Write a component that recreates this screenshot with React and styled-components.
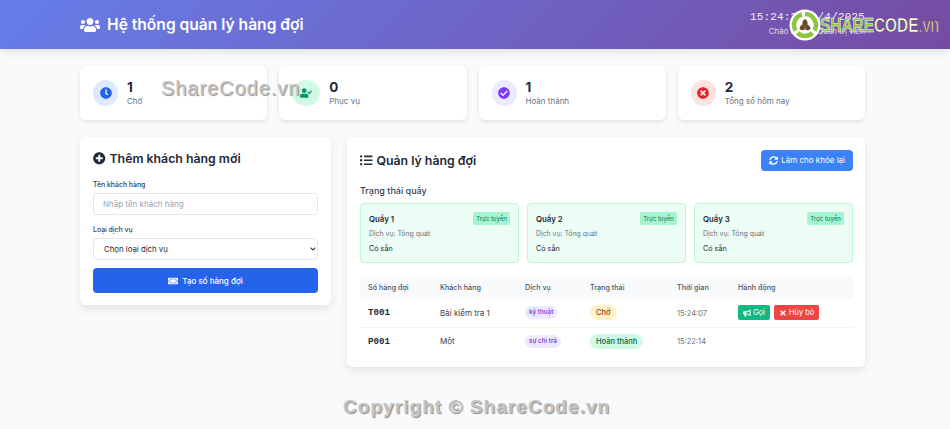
import React from 'react'
import styled, { createGlobalStyle } from 'styled-components'
import {
  FaUsers, FaClock, FaUserCheck, FaCheckCircle, FaTimesCircle, FaPlusCircle,
  FaTicketAlt, FaListUl, FaSyncAlt, FaBullhorn, FaTimes, FaChevronDown,
} from 'react-icons/fa'

const GlobalStyle = createGlobalStyle`
  * { box-sizing: border-box; }
  body {
    margin: 0;
    background: #f8fafc;
    color: #1f2937;
    font-family: Inter, "Noto Sans", sans-serif;
  }
`;

const Page = styled.div`
  position: relative;
  width: 950px;
  height: 429px;
  overflow: hidden;
`;

const Header = styled.header`
  height: 49px;
  padding: 0 85px 0 80px;
  display: flex;
  align-items: center;
  justify-content: space-between;
  color: #fff;
  background: linear-gradient(135deg, #667eea 0%, #764ba2 100%);
  box-shadow: 0 3px 8px rgba(0, 0, 0, 0.1);
`;

const Brand = styled.h1`
  margin: 0;
  display: flex;
  align-items: center;
  gap: 7px;
  font-size: 15.6px;
  font-weight: 600;
  svg { font-size: 20px; }
`;

const Clock = styled.div`
  text-align: right;
  margin-top: -2px;
`;

const ClockTime = styled.div`
  font-family: "Liberation Mono", monospace;
  font-size: 11px;
  letter-spacing: 0.17px;
  opacity: 0.9;
`;

const ClockUser = styled.div`
  margin-top: 3px;
  font-size: 8px;
  opacity: 0.75;
`;

const Main = styled.main`
  padding: 17px 85px 0 80px;
`;

const Stats = styled.section`
  display: grid;
  grid-template-columns: repeat(4, 1fr);
  gap: 12px;
  margin-bottom: 17px;
`;

const StatCard = styled.div`
  height: 54px;
  padding: 0 12px 0 13px;
  display: flex;
  align-items: center;
  gap: 9px;
  background: #fff;
  border-radius: 6px;
  box-shadow: 0 2px 5px rgba(0, 0, 0, 0.09);
`;

const StatIcon = styled.div`
  width: ${p => p.$w}px;
  height: 26px;
  border-radius: 50%;
  display: flex;
  align-items: center;
  justify-content: center;
  font-size: 12px;
  color: ${p => p.$color};
  background: ${p => p.$bg};
`;

const StatValue = styled.div`
  font-size: 13.5px;
  font-weight: 700;
  line-height: 15px;
  padding-top: 1px;
`;

const StatLabel = styled.div`
  margin-top: 1px;
  font-size: 8px;
  line-height: 11px;
  color: #6b7280;
`;

const Columns = styled.section`
  display: grid;
  grid-template-columns: 251px 518px;
  gap: 16px;
  align-items: start;
`;

const Panel = styled.div`
  background: #fff;
  border-radius: 6px;
  box-shadow: 0 4px 10px rgba(0, 0, 0, 0.09);
`;

const FormPanel = styled(Panel)`
  height: 168px;
  padding: 13px 13px 0;
`;

const PanelTitle = styled.h2`
  margin: 0;
  display: flex;
  align-items: center;
  gap: 4px;
  font-size: 12.3px;
  font-weight: 600;
  line-height: 17px;
  svg { font-size: 12.5px; }
`;

const Field = styled.div`
  margin-top: ${p => p.$top}px;
`;

const FieldLabel = styled.label`
  display: block;
  margin-bottom: 3px;
  font-size: 6.9px;
  font-weight: 500;
  line-height: 11px;
  color: #374151;
`;

const TextInput = styled.input`
  display: block;
  width: 100%;
  height: 22px;
  padding: 0 9px;
  border: 1px solid #e5e7eb;
  border-radius: 4px;
  background: #fff;
  font-family: inherit;
  font-size: 8px;
  &::placeholder { color: #9ca3af; opacity: 1; }
`;

const SelectWrap = styled.div`
  position: relative;
  svg {
    position: absolute;
    right: 2px;
    top: 8px;
    font-size: 6px;
    color: #1f2937;
    pointer-events: none;
  }
`;

const Select = styled.select`
  display: block;
  width: 100%;
  height: 22px;
  padding: 0 10px;
  border: 1px solid #e5e7eb;
  border-radius: 4px;
  background: #fff;
  color: #1f2937;
  font-family: inherit;
  font-size: 7.8px;
  appearance: none;
`;

const SubmitButton = styled.button`
  width: 100%;
  height: 25px;
  margin-top: 8px;
  border: 0;
  border-radius: 4px;
  display: flex;
  align-items: center;
  justify-content: center;
  gap: 4px;
  color: #fff;
  background: #2563eb;
  font-family: inherit;
  font-size: 8px;
  font-weight: 500;
  svg { font-size: 10px; }
`;

const QueuePanel = styled(Panel)`
  height: 230px;
  padding: 12px 12px 0 13px;
`;

const QueueHead = styled.div`
  height: 22px;
  display: flex;
  align-items: center;
  justify-content: space-between;
`;

const RefreshButton = styled.button`
  height: 21px;
  padding: 0 8px;
  border: 0;
  border-radius: 4px;
  display: flex;
  align-items: center;
  gap: 3.5px;
  color: #fff;
  background: #3b82f6;
  font-family: inherit;
  font-size: 8px;
  svg { font-size: 9px; }
`;

const SectionLabel = styled.h3`
  margin: 14px 0 6px;
  font-size: 9px;
  font-weight: 500;
  line-height: 12px;
  color: #374151;
`;

const Counters = styled.div`
  display: grid;
  grid-template-columns: repeat(3, 1fr);
  gap: 8px;
  margin-bottom: 13px;
`;

const CounterCard = styled.div`
  height: 60px;
  padding: 8px;
  border: 1px solid #bbf7d0;
  border-radius: 4px;
  background: #ecfdf5;
`;

const CounterTop = styled.div`
  display: flex;
  align-items: center;
  justify-content: space-between;
  height: 13px;
`;

const CounterName = styled.div`
  font-size: 7.8px;
  font-weight: 600;
`;

const OnlineTag = styled.span`
  width: 37px;
  height: 13px;
  border-radius: 2px;
  background: #a7f3d0;
  color: #047857;
  font-size: 6px;
  line-height: 13px;
  text-align: center;
`;

const CounterService = styled.div`
  margin-top: 3px;
  font-size: 6.9px;
  line-height: 11px;
  color: #6b7280;
`;

const CounterState = styled.div`
  margin-top: 4px;
  font-size: 7.2px;
  line-height: 11px;
`;

const Table = styled.table`
  width: 100%;
  border-collapse: collapse;
  table-layout: fixed;
`;

const Th = styled.th`
  width: ${p => p.$w}px;
  height: 23px;
  padding: 0 0 0 8px;
  background: #f8fafc;
  text-align: left;
  font-size: 7.2px;
  font-weight: 500;
  color: #4b5563;
`;

const Td = styled.td`
  height: 28px;
  padding: 0 0 0 8px;
  border-bottom: ${p => (p.$last ? '0' : '1px solid #f1f5f9')};
  font-size: 8px;
  color: #374151;
`;

const Ticket = styled.span`
  font-family: "Liberation Mono", monospace;
  font-size: 9.2px;
  font-weight: 700;
  color: #1f2937;
`;

const Pill = styled.span`
  display: inline-block;
  border-radius: 8px;
  padding: 0 ${p => p.$pad}px;
  line-height: ${p => p.$line}px;
  font-size: ${p => p.$size}px;
  font-weight: 500;
  color: ${p => p.$color};
  background: ${p => p.$bg};
`;

const TimeText = styled.span`
  font-size: 7.5px;
  color: #6b7280;
`;

const Actions = styled.div`
  display: flex;
  gap: 4px;
`;

const ActionButton = styled.button`
  height: 15px;
  padding: 0 5px;
  border: 0;
  border-radius: 2px;
  display: flex;
  align-items: center;
  gap: 2px;
  color: #fff;
  background: ${p => p.$bg};
  font-family: inherit;
  font-size: 7.5px;
  svg { font-size: 8px; }
`;

// watermarks sit on top of the page
const Watermark = styled.div`
  position: absolute;
  font-family: "Liberation Sans", sans-serif;
  font-weight: 700;
  color: #c4c4c4;
  text-shadow: 1px 1px 1px #8a8a8a;
  white-space: nowrap;
`;

const TopMark = styled(Watermark)`
  left: 161px;
  top: 77px;
  font-size: 20px;
  font-weight: 400;
  letter-spacing: 0.95px;
`;

const BottomMark = styled(Watermark)`
  left: 343px;
  top: 396px;
  font-size: 19px;
  letter-spacing: 1.05px;
`;

const Logo = styled.div`
  position: absolute;
  left: 789px;
  top: 9px;
  display: flex;
  align-items: center;
`;

const LogoWord = styled.div`
  margin-left: -2px;
  font-family: "Liberation Sans", sans-serif;
  font-size: 20px;
  font-weight: 700;
  color: #fff;
  white-space: nowrap;
  transform: scaleX(0.77);
  transform-origin: left center;
  -webkit-text-stroke: 0.7px #6a5434;
`;

const LogoGreen = styled.span`
  color: #8cc63f;
  -webkit-text-stroke: 0.5px #fff;
`;

const LogoSmall = styled.span`
  font-weight: 400;
`;

function LogoMark() {
  return (
    <svg width="33" height="32" viewBox="0 0 33 32">
      <circle cx="16" cy="16" r="15.5" fill="#fff" />
      <g fill="none" stroke="#8cc63f" strokeWidth="4.5">
        <path d="M16 5a11 11 0 0 1 9.5 16.5" />
        <path d="M23.5 24a11 11 0 0 1-15 0" />
        <path d="M6.5 21.5A11 11 0 0 1 13 5.5" />
      </g>
      <path d="M16 10c2 1 3 3 2.6 5.4L16 17l-2.6-1.6C13 13 14 11 16 10zM10.5 20c.2-2.400 1.500-3.800 3.700-4.400L16 17.500l-.3 3C13.800 21.800 12 21.500 10.500 20zM21.500 20c-1.500 1.500-3.300 1.800-5.200.5l-.3-3 1.800-1.900c2.200.6 3.500 2 3.700 4.400z" fill="#6b4a2a" />
    </svg>
  )
}

const stats = [
  { value: 1, label: 'Chờ', icon: <FaClock />, w: 25, color: '#2563eb', bg: '#dbeafe' },
  { value: 0, label: 'Phục vụ', icon: <FaUserCheck />, w: 28, color: '#059669', bg: '#d1fae5' },
  { value: 1, label: 'Hoàn thành', icon: <FaCheckCircle />, w: 25, color: '#7c3aed', bg: '#ede9fe' },
  { value: 2, label: 'Tổng số hôm nay', icon: <FaTimesCircle />, w: 25, color: '#dc2626', bg: '#fee2e2' },
]

const counters = ['Quầy 1', 'Quầy 2', 'Quầy 3']

export default function App() {
  return (
    <Page>
      <GlobalStyle />
      <Header>
        <Brand><FaUsers /> Hệ thống quản lý hàng đợi</Brand>
        <Clock>
          <ClockTime>15:24:22 1/4/2025</ClockTime>
          <ClockUser>Chào mừng, Quản trị viên</ClockUser>
        </Clock>
      </Header>
      <Main>
        <Stats>
          {stats.map(s => (
            <StatCard key={s.label}>
              <StatIcon $w={s.w} $color={s.color} $bg={s.bg}>{s.icon}</StatIcon>
              <div>
                <StatValue>{s.value}</StatValue>
                <StatLabel>{s.label}</StatLabel>
              </div>
            </StatCard>
          ))}
        </Stats>
        <Columns>
          <FormPanel>
            <PanelTitle><FaPlusCircle /> Thêm khách hàng mới</PanelTitle>
            <Field $top={12}>
              <FieldLabel>Tên khách hàng</FieldLabel>
              <TextInput placeholder="Nhập tên khách hàng" />
            </Field>
            <Field $top={9}>
              <FieldLabel>Loại dịch vụ</FieldLabel>
              <SelectWrap>
                <Select><option>Chọn loại dịch vụ</option></Select>
                <FaChevronDown />
              </SelectWrap>
            </Field>
            <SubmitButton><FaTicketAlt /> Tạo số hàng đợi</SubmitButton>
          </FormPanel>
          <QueuePanel>
            <QueueHead>
              <PanelTitle><FaListUl /> Quản lý hàng đợi</PanelTitle>
              <RefreshButton><FaSyncAlt /> Làm cho khỏe lại</RefreshButton>
            </QueueHead>
            <SectionLabel>Trạng thái quầy</SectionLabel>
            <Counters>
              {counters.map(name => (
                <CounterCard key={name}>
                  <CounterTop>
                    <CounterName>{name}</CounterName>
                    <OnlineTag>Trực tuyến</OnlineTag>
                  </CounterTop>
                  <CounterService>Dịch vụ: Tổng quát</CounterService>
                  <CounterState>Có sẵn</CounterState>
                </CounterCard>
              ))}
            </Counters>
            <Table>
              <thead>
                <tr>
                  <Th $w={72}>Số hàng đợi</Th>
                  <Th $w={85}>Khách hàng</Th>
                  <Th $w={65}>Dịch vụ</Th>
                  <Th $w={87}>Trạng thái</Th>
                  <Th $w={61}>Thời gian</Th>
                  <Th $w={123}>Hành động</Th>
                </tr>
              </thead>
              <tbody>
                <tr>
                  <Td><Ticket>T001</Ticket></Td>
                  <Td>Bài kiểm tra 1</Td>
                  <Td><Pill $pad={4} $line={13} $size={6.3} $color="#6d28d9" $bg="#ede9fe">kỹ thuật</Pill></Td>
                  <Td><Pill $pad={6} $line={15} $size={7.5} $color="#92400e" $bg="#fef3c7">Chờ</Pill></Td>
                  <Td><TimeText>15:24:07</TimeText></Td>
                  <Td>
                    <Actions>
                      <ActionButton $bg="#10b981"><FaBullhorn /> Gọi</ActionButton>
                      <ActionButton $bg="#ef4444"><FaTimes /> Hủy bỏ</ActionButton>
                    </Actions>
                  </Td>
                </tr>
                <tr>
                  <Td $last><Ticket>P001</Ticket></Td>
                  <Td $last>Một</Td>
                  <Td $last><Pill $pad={4} $line={13} $size={6.3} $color="#6d28d9" $bg="#ede9fe">sự chi trả</Pill></Td>
                  <Td $last><Pill $pad={6} $line={15} $size={7.5} $color="#065f46" $bg="#d1fae5">Hoàn thành</Pill></Td>
                  <Td $last><TimeText>15:22:14</TimeText></Td>
                  <Td $last />
                </tr>
              </tbody>
            </Table>
          </QueuePanel>
        </Columns>
      </Main>
      <TopMark>ShareCode.vn</TopMark>
      <BottomMark>Copyright © ShareCode.vn</BottomMark>
      <Logo>
        <LogoMark />
        <LogoWord><LogoGreen>SHARE</LogoGreen>CODE<LogoSmall>.vn</LogoSmall></LogoWord>
      </Logo>
    </Page>
  )
}
